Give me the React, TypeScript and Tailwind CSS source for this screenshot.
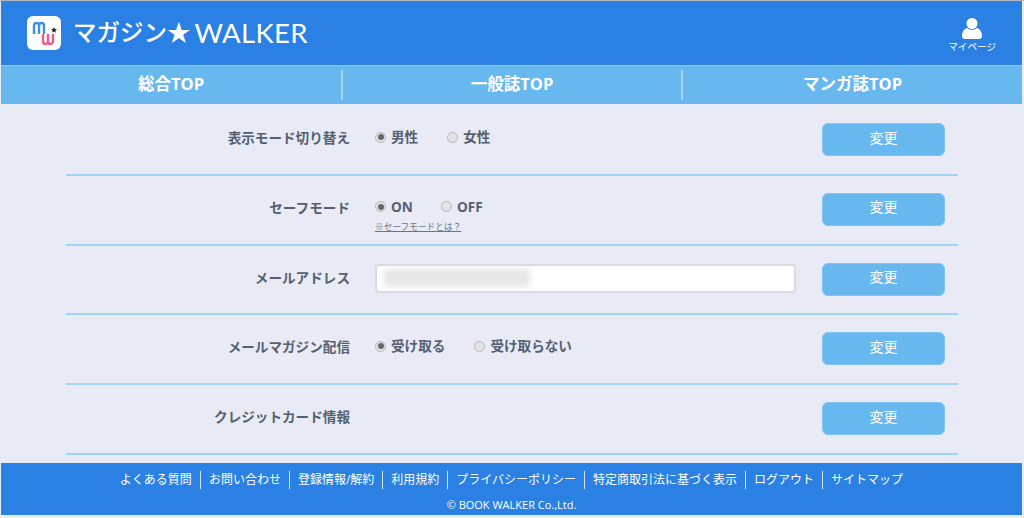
const fontStack = "font-['Open_Sans','Noto_Sans_CJK_JP',sans-serif]";

const Radio = ({ label, checked }: { label: string; checked?: boolean }) => (
  <label className="flex items-center gap-[5px]">
    <span className="flex h-[11px] w-[11px] items-center justify-center rounded-full border border-[#b4b6bc] bg-[#e2e3e6]">
      {checked && <span className="h-[6px] w-[6px] rounded-full bg-[#666]" />}
    </span>
    <span className="text-[13.6px] leading-5 font-bold text-[#555f70]">{label}</span>
  </label>
);

const ChangeButton = () => (
  <button className="ml-auto mr-[13px] h-[33px] w-[123px] shrink-0 rounded-md border border-[#80c4f1] bg-[#66b8ee] pb-[5px] text-[14px] text-white">
    変更
  </button>
);

const Row = ({ label, children }: { label: string; children?: React.ReactNode }) => (
  <div className="flex h-[69.75px] border-b-2 border-[#9fd4f7] pt-[17px]">
    <div className="w-[284px] shrink-0 pt-[5px] text-right text-[13.6px] leading-5 font-bold text-[#555f70]">{label}</div>
    <div className="ml-[25px] pt-[4px]">{children}</div>
    <ChangeButton />
  </div>
);

const footerLinks = [
  "よくある質問",
  "お問い合わせ",
  "登録情報/解約",
  "利用規約",
  "プライバシーポリシー",
  "特定商取引法に基づく表示",
  "ログアウト",
  "サイトマップ",
];

export default function App() {
  return (
    <div className={`${fontStack} flex h-[518px] w-[1024px] flex-col overflow-hidden border-t border-[#b5b8c0] bg-[#e8ebf5]`}>
      <div className="ml-px mr-[2px]">
        {/* Header */}
        <header className="flex h-[64px] items-center justify-between bg-[#2a80e3] pl-[26px] pr-[26px]">
          <div className="flex items-center">
            <svg width="34" height="34" viewBox="0 0 34 34">
              <rect width="34" height="34" rx="6" fill="#fff" />
              <path d="M7 18V9.500a2.500 2.500 0 0 1 5 0V18M12 9.500a2.500 2.500 0 0 1 5 0V18" fill="none" stroke="#3d8fe6" strokeWidth="2.4" />
              <path d="M16 18v7.500a2.500 2.500 0 0 0 5 0V18M21 25.500a2.500 2.500 0 0 0 5 0V18" fill="none" stroke="#ea5a8c" strokeWidth="2.4" />
              <path d="M27 11l.9 2 2.100.2-1.600 1.400.5 2.100-1.900-1.100-1.900 1.100.5-2.100-1.600-1.400 2.100-.2z" fill="#222" />
            </svg>
            <span className="ml-[12px] text-[23.5px] leading-none font-medium text-white">マガジン★</span>
            <span className="ml-[4px] font-['Lato',sans-serif] text-[27.5px] leading-none tracking-[0.3px] text-white">WALKER</span>
          </div>
          <div className="flex flex-col items-center pt-[6px]">
            <svg width="20" height="21" viewBox="0 0 20 21" fill="#fff">
              <circle cx="10" cy="5.500" r="5.500" />
              <path d="M0 18c0-5 3-7.500 5-8 1.500 1.300 3 1.800 5 1.800s3.500-.5 5-1.800c2 .5 5 3 5 8 0 2-1.200 3-3 3H3c-1.800 0-3-1-3-3z" />
            </svg>
            <span className="mt-[1px] text-[9.6px] leading-[14px] text-white">マイページ</span>
          </div>
        </header>

        {/* Nav */}
        <nav className="grid h-[39px] grid-cols-[342px_340px_1fr] items-center border-t border-[#8ccbf2] bg-[#66b8ee] pb-[1px] text-[16.5px] font-bold text-white">
          <a className="flex h-[30px] items-center justify-center border-r-2 border-[#a6d6f5]">総合TOP</a>
          <a className="flex h-[30px] items-center justify-center border-r-2 border-[#a6d6f5]">一般誌TOP</a>
          <a className="flex h-[30px] items-center justify-center">マンガ誌TOP</a>
        </nav>
      </div>

      <main className="mx-[66px] mt-[2px] w-[892px]">
        <Row label="表示モード切り替え">
          <div className="flex gap-[29px]">
            <Radio label="男性" checked />
            <Radio label="女性" />
          </div>
        </Row>
        <Row label="セーフモード">
          <div className="flex gap-[28px]">
            <Radio label="ON" checked />
            <Radio label="OFF" />
          </div>
          <a className="mt-[4px] block text-[8.7px] leading-[12px] text-[#6b7484] underline">※セーフモードとは？</a>
        </Row>
        <div className="flex h-[69.75px] border-b-2 border-[#9fd4f7] pt-[17px]">
          <div className="w-[284px] shrink-0 pt-[5px] text-right text-[13.6px] leading-5 font-bold text-[#555f70]">メールアドレス</div>
          <div className="relative ml-[25px] mt-[1px] h-[29px] w-[421px] rounded-[4px] border-2 border-[#d9dbe2] bg-white">
            <div className="absolute left-[7px] top-[3px] h-[18px] w-[146px] bg-[#e6e6e6] blur-[3px]" />
          </div>
          <ChangeButton />
        </div>
        <Row label="メールマガジン配信">
          <div className="flex gap-[29px]">
            <Radio label="受け取る" checked />
            <Radio label="受け取らない" />
          </div>
        </Row>
        <Row label="クレジットカード情報" />
      </main>

      {/* Footer */}
      <footer className="ml-px mr-[2px] mt-[8.25px] flex h-[52px] flex-col items-center bg-[#2a80e3] text-white">
        <ul className="mt-[8px] flex h-[18px] items-center text-[12px]">
          {footerLinks.map((link, i) => (
            <li key={link} className={`flex h-[18px] items-center px-[8px] ${i > 0 ? "border-l border-[#cfe3f8]" : ""}`}>
              {link}
            </li>
          ))}
        </ul>
        <p className="mt-[9px] text-[11px] leading-[14px]">© BOOK WALKER Co.,Ltd.</p>
      </footer>
    </div>
  );
}
